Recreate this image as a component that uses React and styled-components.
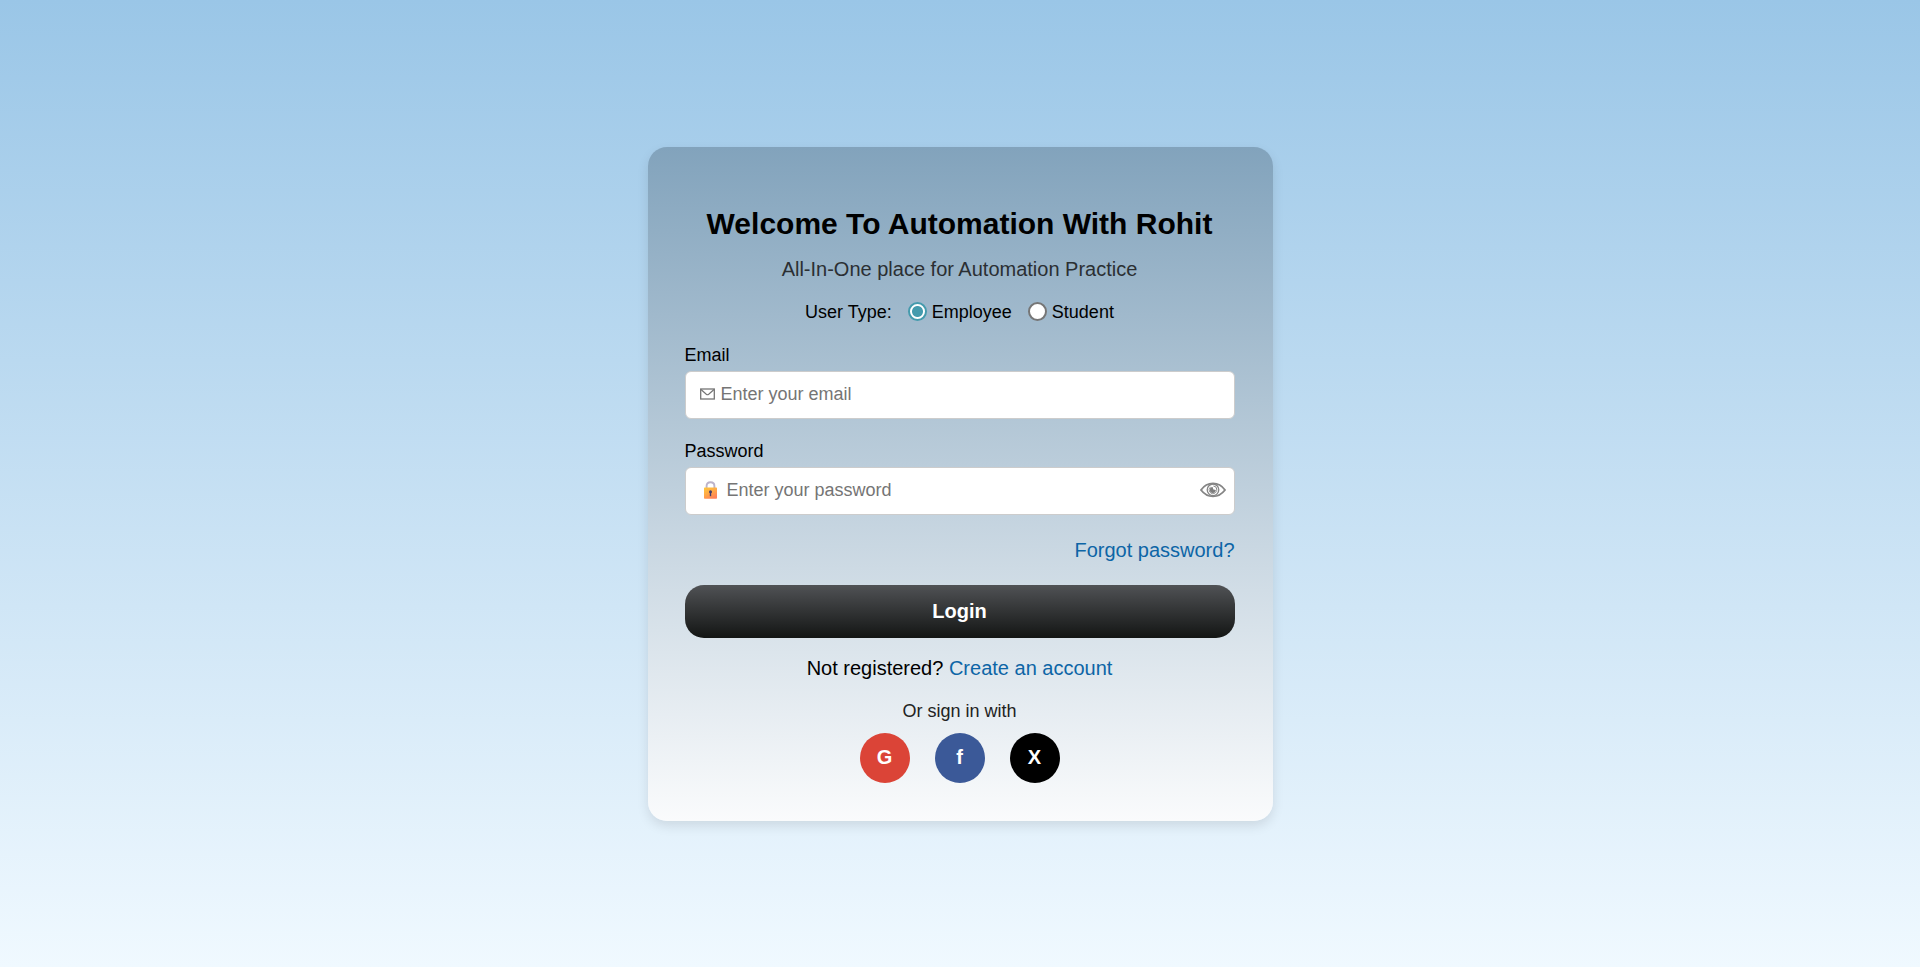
import React, { useState } from "react";
import styled, { createGlobalStyle } from "styled-components";

const GlobalStyle = createGlobalStyle`
  *, *::before, *::after { box-sizing: border-box; }
  body {
    margin: 0;
    font-family: "Liberation Sans", Arial, sans-serif;
    color: #000;
  }
  button, input { font-family: inherit; }
`;

const Page = styled.main`
  min-height: 100vh;
  display: flex;
  align-items: center;
  justify-content: center;
  background: linear-gradient(to bottom, #9ac6e7, #f0f9ff);
`;

const Card = styled.form`
  width: 100%;
  max-width: 625px;
  padding: 59px 38px 38px 37px;
  border-radius: 19px;
  display: flex;
  flex-direction: column;
  background: linear-gradient(to bottom, #82a3bc, #fafbfc);
  box-shadow: 0 5px 12px rgba(0, 0, 0, 0.1);
`;

const Title = styled.h1`
  margin: 0 0 15px;
  font-size: 30px;
  line-height: 36px;
  text-align: center;
`;

const Subtitle = styled.p`
  margin: 0 0 19px;
  font-size: 20px;
  line-height: 24px;
  text-align: center;
  color: #2b2f33;
`;

const UserType = styled.div`
  display: flex;
  align-items: center;
  justify-content: center;
  gap: 16px;
  margin-bottom: 21px;
  font-size: 18px;
  line-height: 24px;
`;

const RadioLabel = styled.label`
  display: flex;
  align-items: center;
  gap: 5px;
`;

const Radio = styled.input`
  appearance: none;
  width: 19px;
  height: 19px;
  margin: 0;
  border: 2px solid #767676;
  border-radius: 50%;
  background: #fff;
  &:checked {
    border-color: #459bad;
    background: radial-gradient(circle, #459bad 5px, #fff 6px);
  }
`;

const Field = styled.div`
  display: flex;
  flex-direction: column;
  gap: 6px;
  margin-bottom: 22px;
`;

const FieldLabel = styled.label`
  font-size: 18px;
  line-height: 20px;
`;

const InputBox = styled.div`
  display: flex;
  align-items: center;
  gap: 6px;
  height: 48px;
  padding: 0 8px 2px 14px;
  border: 1px solid #ccc;
  border-radius: 6px;
  background: #fff;
`;

const TextInput = styled.input`
  flex: 1;
  min-width: 0;
  height: 100%;
  padding: 2px 0 0;
  border: 0;
  outline: 0;
  background: transparent;
  font-size: 18px;
  color: #000;
  &::placeholder { color: #757575; opacity: 1; }
`;

const EyeButton = styled.button`
  display: flex;
  padding: 0;
  border: 0;
  background: transparent;
  cursor: pointer;
`;

const Link = styled.a`
  color: #0d65a6;
  font-size: 20px;
  line-height: 24px;
  text-decoration: none;
`;

const Forgot = styled(Link)`
  align-self: flex-end;
  margin: 1px 0 23px;
`;

const LoginButton = styled.button`
  height: 53px;
  margin-bottom: 18px;
  border: 0;
  border-radius: 19px;
  background: linear-gradient(to bottom, #505255, #131514);
  color: #fff;
  font-size: 20px;
  font-weight: bold;
  cursor: pointer;
`;

const Register = styled.p`
  margin: 0 0 21px;
  font-size: 20px;
  line-height: 24px;
  text-align: center;
`;

const SocialText = styled.p`
  margin: 0 0 12px;
  font-size: 18px;
  line-height: 20px;
  text-align: center;
  color: #222;
`;

const SocialRow = styled.div`
  display: flex;
  justify-content: center;
  gap: 25px;
`;

const SocialButton = styled.button`
  width: 50px;
  height: 50px;
  padding: 0;
  border: 0;
  border-radius: 50%;
  background: ${({ $color }) => $color};
  color: #fff;
  font-size: 20px;
  font-weight: bold;
  cursor: pointer;
`;

const EnvelopeIcon = () => (
  <svg width="15" height="12" viewBox="0 0 15 12" fill="none" stroke="#757575" aria-hidden="true">
    <rect x="0.7" y="1" width="13.6" height="10" strokeWidth="1.3" />
    <path d="M1 1.5 L6.3 6.3 Q7.5 7.2 8.7 6.3 L14 1.5" strokeWidth="1.2" />
  </svg>
);

const LockIcon = () => (
  <svg width="21" height="18" viewBox="0 0 21 18" aria-hidden="true">
    <defs>
      <linearGradient id="lockBody" x1="0" y1="0" x2="0.6" y2="1">
        <stop offset="0" stopColor="#ffc83d" />
        <stop offset="0.5" stopColor="#ffaa45" />
        <stop offset="1" stopColor="#ff8257" />
      </linearGradient>
    </defs>
    <path d="M6.6 8 V5 Q6.6 1.3 10.5 1.3 Q14.4 1.3 14.4 5 V8" fill="none" stroke="#bcb3ca" strokeWidth="1.9" />
    <rect x="4" y="6.6" width="13" height="11.2" rx="0.7" fill="url(#lockBody)" />
    <circle cx="10.5" cy="10.8" r="1.5" fill="#433b6b" />
    <path d="M9.8 11.5 H11.2 V15.2 H9.8 Z" fill="#433b6b" />
  </svg>
);

const EyeIcon = () => (
  <svg width="26" height="16" viewBox="0 0 26 16" fill="none" stroke="#858585" aria-hidden="true">
    <path d="M1 8 C4.5 3 8.5 1.4 13 1.4 S21.5 3 25 8 C21.5 12.6 17.5 14.4 13 14.4 S4.5 12.6 1 8 Z" strokeWidth="1.8" />
    <circle cx="13" cy="7.8" r="5.8" strokeWidth="1.3" />
    <path d="M10.6 4.8 A3.9 3.9 0 1 0 16.6 6.4" strokeWidth="0.8" />
    <path d="M12.6 5 A3 3 0 1 0 15.8 8 L13.4 7.6 Z" fill="#7d7d7d" stroke="none" />
    <path d="M13.4 4 A3.6 3.6 0 0 1 16.8 7.4" strokeWidth="1" />
  </svg>
);

const socials = [
  { text: "G", color: "#db4437", name: "Sign in with Google" },
  { text: "f", color: "#3b5998", name: "Sign in with Facebook" },
  { text: "X", color: "#000", name: "Sign in with X" },
];

export default function App() {
  const [userType, setUserType] = useState("Employee");
  const [visible, setVisible] = useState(false);

  return (
    <>
      <GlobalStyle />
      <Page>
        <Card onSubmit={(e) => e.preventDefault()}>
          <Title>Welcome To Automation With Rohit</Title>
          <Subtitle>All-In-One place for Automation Practice</Subtitle>
          <UserType role="radiogroup" aria-labelledby="user-type">
            <span id="user-type">User Type:</span>
            {["Employee", "Student"].map((type) => (
              <RadioLabel key={type}>
                <Radio
                  type="radio"
                  name="userType"
                  value={type}
                  checked={userType === type}
                  onChange={() => setUserType(type)}
                />
                {type}
              </RadioLabel>
            ))}
          </UserType>
          <Field>
            <FieldLabel htmlFor="email">Email</FieldLabel>
            <InputBox>
              <EnvelopeIcon />
              <TextInput id="email" type="email" placeholder="Enter your email" />
            </InputBox>
          </Field>
          <Field>
            <FieldLabel htmlFor="password">Password</FieldLabel>
            <InputBox>
              <LockIcon />
              <TextInput
                id="password"
                type={visible ? "text" : "password"}
                placeholder="Enter your password"
              />
              <EyeButton type="button" aria-label="Show password" onClick={() => setVisible(!visible)}>
                <EyeIcon />
              </EyeButton>
            </InputBox>
          </Field>
          <Forgot href="#forgot">Forgot password?</Forgot>
          <LoginButton type="submit">Login</LoginButton>
          <Register>
            Not registered? <Link href="#register">Create an account</Link>
          </Register>
          <SocialText>Or sign in with</SocialText>
          <SocialRow>
            {socials.map((s) => (
              <SocialButton key={s.text} type="button" $color={s.color} aria-label={s.name}>
                {s.text}
              </SocialButton>
            ))}
          </SocialRow>
        </Card>
      </Page>
    </>
  );
}
